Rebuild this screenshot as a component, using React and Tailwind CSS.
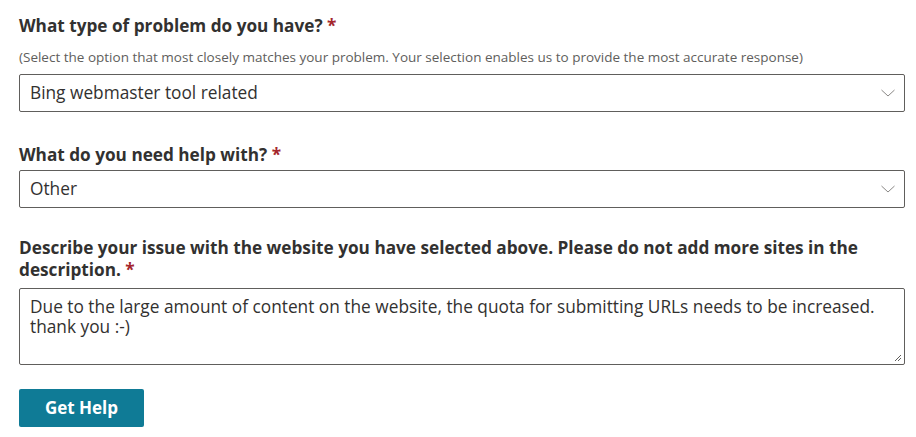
function Chevron() {
  return (
    <svg width="16" height="16" viewBox="0 0 16 16" className="text-[#8a8886]">
      <path d="M1.5 5 L8 11 L14.5 5" fill="none" stroke="currentColor" strokeWidth="1" />
    </svg>
  )
}

function Label({ children }) {
  return (
    <label className="block text-[17.2px] font-bold leading-[22px] text-[#323130]">
      {children} <span className="text-[#a4262c]">*</span>
    </label>
  )
}

function SelectBox({ value }) {
  return (
    <div className="flex h-[38px] items-center justify-between rounded-[2px] border border-[#605e5c] bg-white pl-[10px] pr-[8px]">
      <span className="text-[17.3px] text-[#323130]">{value}</span>
      <Chevron />
    </div>
  )
}

export default function App() {
  return (
    <div className="min-h-[437px] bg-white pl-[19px] pr-[11px] pt-[15px] font-['Open_Sans',sans-serif]">
      <Label>What type of problem do you have?</Label>
      <p className="mt-[11px] text-[13.5px] leading-[18px] text-[#605e5c]">
        (Select the option that most closely matches your problem. Your selection enables us to provide the most accurate response)
      </p>
      <div className="mt-[8px]">
        <SelectBox value="Bing webmaster tool related" />
      </div>

      <div className="mt-[32px]">
        <Label>What do you need help with?</Label>
      </div>
      <div className="mt-[4px]">
        <SelectBox value="Other" />
      </div>

      <div className="mt-[29px]">
        <Label>Describe your issue with the website you have selected above. Please do not add more sites in the description.</Label>
      </div>
      <div className="relative mt-[7px] h-[77px] rounded-[2px] border border-[#605e5c] bg-white px-[10px] pt-[8px]">
        <p className="text-[17.3px] leading-[20px] text-[#323130]">
          Due to the large amount of content on the website, the quota for submitting URLs needs to be increased.
          <br />
          thank you :-)
        </p>
        <svg width="8" height="8" viewBox="0 0 8 8" className="absolute bottom-[2px] right-[2px] text-[#605e5c]">
          <path d="M7 1 L1 7 M7 4 L4 7" stroke="currentColor" strokeWidth="1" />
        </svg>
      </div>

      <button className="mt-[24px] h-[38px] w-[125px] rounded-[2px] bg-[#0f7b96] text-[17px] font-bold text-white">
        Get Help
      </button>
    </div>
  )
}
